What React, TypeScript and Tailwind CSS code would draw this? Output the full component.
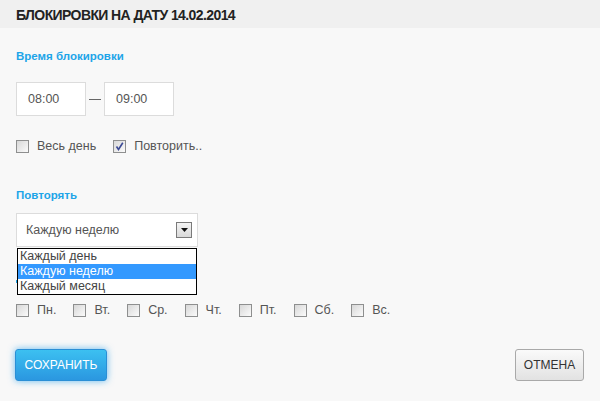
import React from 'react';

function Box({ checked = false }: { checked?: boolean }) {
  return (
    <span className="relative inline-block h-[13px] w-[13px] shrink-0 border border-[#8e8f8f] bg-gradient-to-br from-[#d8d8d8] to-[#fbfbfb]">
      {checked && (
        <svg viewBox="0 0 11 11" className="absolute left-0 top-0 h-[11px] w-[11px]">
          <path d="M2.5 5.5 L4.5 8.5 L8.8 1.8" fill="none" stroke="#3b4a95" strokeWidth="1.6" />
        </svg>
      )}
    </span>
  );
}

function Check({ label, checked }: { label: string; checked?: boolean }) {
  return (
    <label className="flex items-center gap-[8px] text-[12.5px] leading-[16px] text-[#555]">
      <Box checked={checked} />
      <span>{label}</span>
    </label>
  );
}

const days = ['Пн.', 'Вт.', 'Ср.', 'Чт.', 'Пт.', 'Сб.', 'Вс.'];

export default function App() {
  return (
    <div
      className="h-[401px] w-[600px] overflow-hidden bg-[#f8f8f8]"
      style={{ fontFamily: '"Liberation Sans", Arial, sans-serif' }}
    >
      <div className="h-[28px] bg-[#f0f0f0] px-[16px] text-[14px] font-bold leading-[30px] tracking-[-0.6px] text-[#222]">
        БЛОКИРОВКИ НА ДАТУ 14.02.2014
      </div>

      <div className="px-[16px]">
        <div className="mt-[20px] text-[11.5px] font-bold leading-[16px] text-[#1ea5e8]">
          Время блокировки
        </div>

        <div className="mt-[18px] flex items-center">
          <div className="flex h-[34px] w-[70px] items-center border border-[#dcdcdc] bg-white pl-[11px] text-[12.5px] text-[#555]">
            08:00
          </div>
          <div className="mx-[3px] w-[12px] border-t border-[#666]" />
          <div className="flex h-[34px] w-[70px] items-center border border-[#dcdcdc] bg-white pl-[11px] text-[12.5px] text-[#555]">
            09:00
          </div>
        </div>

        <div className="mt-[22px] flex items-center gap-[17px]">
          <Check label="Весь день" />
          <Check label="Повторить.." checked />
        </div>

        <div className="mt-[33px] text-[11.5px] font-bold leading-[16px] text-[#1ea5e8]">
          Повторять
        </div>

        <div className="relative mt-[10px] w-[182px]">
          <div className="flex h-[34px] items-center justify-between border border-[#dcdcdc] bg-white pl-[9px] pr-[5px] text-[12.5px] text-[#555]">
            <span>Каждую неделю</span>
            <span className="flex h-[16px] w-[16px] items-center justify-center border border-[#7a7a7a] bg-gradient-to-b from-[#f4f4f4] to-[#d9d9d9]">
              <svg viewBox="0 0 7 4" className="h-[4px] w-[7px]">
                <path d="M0 0 H7 L3.5 4 Z" fill="#111" />
              </svg>
            </span>
          </div>
          <div className="absolute left-[1px] right-[1px] top-[35px] z-10 border border-black bg-white text-[12.5px] leading-[15px] text-[#444]">
            <div className="px-[2px]">Каждый день</div>
            <div className="bg-[#3399ff] px-[2px] text-white">Каждую неделю</div>
            <div className="px-[2px]">Каждый месяц</div>
          </div>
          <div className="mt-[33px] h-[3px] w-[1px] bg-[#1ea5e8]" />
        </div>

        <div className="mt-[19px] flex items-center gap-[17px]">
          {days.map((d) => (
            <Check key={d} label={d} />
          ))}
        </div>

        <div className="mt-[31px] flex items-center justify-between">
          <button className="ml-[-1px] h-[32px] w-[92px] rounded-[3px] border border-[#2a8fd6] bg-gradient-to-b from-[#3cc0f1] to-[#2b97e0] text-[12px] text-white shadow-[0_0_7px_rgba(40,160,235,0.7)]">
            СОХРАНИТЬ
          </button>
          <button className="h-[32px] w-[69px] rounded-[3px] border border-[#a9a9a9] bg-gradient-to-b from-[#fafafa] to-[#e2e2e2] text-[12px] text-[#333]">
            ОТМЕНА
          </button>
        </div>
      </div>
    </div>
  );
}
